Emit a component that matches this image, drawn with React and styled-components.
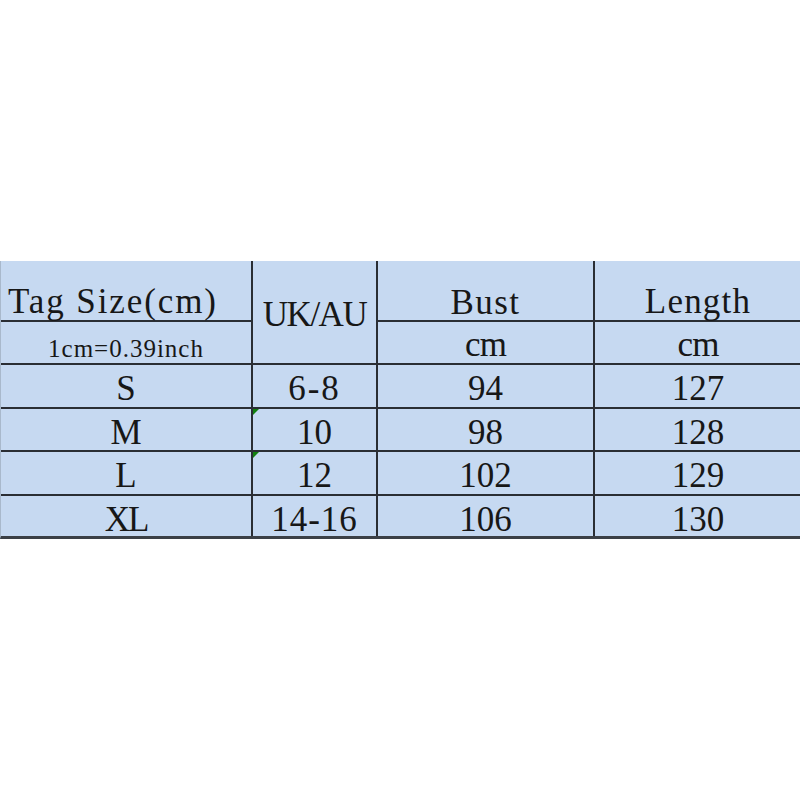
import React from "react";
import styled, { createGlobalStyle } from "styled-components";

const Global = createGlobalStyle`
  html, body { margin: 0; padding: 0; background: #ffffff; }
  #root { width: 800px; }
`;

const Page = styled.div`
  width: 800px;
  height: 800px;
  display: flex;
  align-items: center;
  background: #ffffff;
`;

const Sheet = styled.div`
  width: 800px;
  display: grid;
  grid-template-columns: 250px 123px 215px 206px;
  grid-template-rows: 59px 41px 42px 41px 42px 40px;
  gap: 2px;
  background: #2a2e34;
  border-bottom: 3px solid #3b4046;
  border-left: 1px solid #a9b9cc;
  box-sizing: border-box;
`;

const Cell = styled.div`
  position: relative;
  background: #c6d9f1;
  display: flex;
  align-items: flex-start;
  justify-content: ${(p) => (p.$left ? "flex-start" : "center")};
  padding-top: ${(p) => p.$top ?? 9}px;
  padding-left: ${(p) => p.$pl ?? 0}px;
  box-sizing: border-box;
  grid-row: ${(p) => (p.$span ? `span ${p.$span}` : "auto")};
  font-family: "Liberation Serif", "DejaVu Serif", "Times New Roman", serif;
  font-size: ${(p) => p.$size ?? 35}px;
  line-height: ${(p) => p.$lh ?? 30}px;
  letter-spacing: ${(p) => p.$ls ?? 0}px;
  color: #171717;
  white-space: nowrap;

  ${(p) =>
    p.$flag &&
    `
    &::before {
      content: "";
      position: absolute;
      left: 0;
      top: 0;
      width: 0;
      height: 0;
      border-top: 6px solid #12800f;
      border-right: 6px solid transparent;
    }
  `}
`;

const rows = [
  { tag: "S", uk: "6-8", ukLs: 2, bust: "94", len: "127" },
  { tag: "M", uk: "10", bust: "98", len: "128", flag: true },
  { tag: "L", uk: "12", bust: "102", len: "129", flag: true },
  { tag: "XL", tagLs: -2, uk: "14-16", ukLs: 1, bust: "106", len: "130" },
];

export default function App() {
  return (
    <>
      <Global />
      <Page>
        <Sheet>
          <Cell $left $pl={7} $top={26} $ls={1.9}>Tag Size(cm)</Cell>
          <Cell $span={2} $top={39} $ls={-1.5}>UK/AU</Cell>
          <Cell $top={27} $ls={1.5}>Bust</Cell>
          <Cell $top={26} $ls={1.2}>Length</Cell>

          <Cell $size={25} $lh={22} $top={16} $ls={1}>1cm=0.39inch</Cell>
          <Cell $top={8} $ls={-1}>cm</Cell>
          <Cell $top={8} $ls={-1}>cm</Cell>

          {rows.map((r) => (
            <React.Fragment key={r.tag}>
              <Cell $ls={r.tagLs}>{r.tag}</Cell>
              <Cell $ls={r.ukLs} $flag={r.flag}>{r.uk}</Cell>
              <Cell>{r.bust}</Cell>
              <Cell>{r.len}</Cell>
            </React.Fragment>
          ))}
        </Sheet>
      </Page>
    </>
  );
}
